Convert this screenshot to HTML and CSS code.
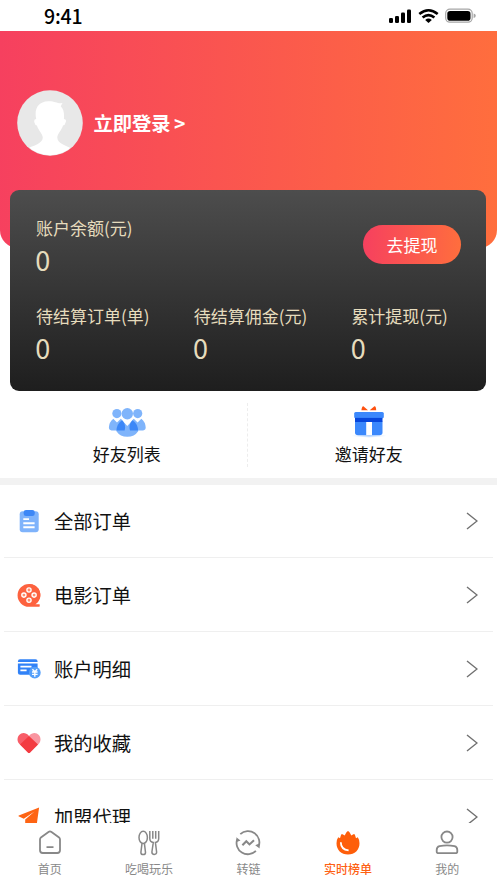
FILE: index.html
```html
<!DOCTYPE html>
<html lang="zh-CN">
<head>
<meta charset="utf-8">
<meta name="viewport" content="width=device-width, initial-scale=1">
<title>我的</title>
<link rel="stylesheet" href="styles.css">
</head>
<body>
<div class="app">
  <header class="status">
    <span class="time">9:41</span>
    <svg class="status-icons" width="92" height="20" viewBox="0 0 92 20">
      <g fill="#000">
        <rect x="1" y="12" width="4" height="5" rx="1.3"/><rect x="7" y="10" width="4" height="7" rx="1.3"/><rect x="13" y="6.5" width="4" height="10.5" rx="1.3"/><rect x="19" y="3.5" width="4" height="13.5" rx="1.3"/>
        <path d="M37.2 13.9Q40.5 11.2 43.8 13.9L40.5 17Z"/>
      </g>
      <path d="M31.3 8.1Q40.5 .4 49.7 8.1M34.6 11.5Q40.5 6.6 46.4 11.5" fill="none" stroke="#000" stroke-width="2.6"/>
      <rect x="57.7" y="3.2" width="26.5" height="13" rx="4.2" fill="#fff" stroke="#a6a6a6" stroke-width="1.2"/>
      <rect x="59.3" y="4.9" width="23.2" height="9.8" rx="2.8"/>
      <path d="M85.6 7.6Q87.8 8 87.8 9.8T85.6 12Z" fill="#a6a6a6"/>
    </svg>
  </header>

  <main class="content">
    <section class="hero">
      <svg class="avatar" width="66" height="66" viewBox="0 0 66 66">
        <defs><clipPath id="face"><circle cx="33" cy="33" r="32.2"/></clipPath></defs>
        <circle cx="33" cy="33" r="32.8" fill="#e8e8e8"/>
        <path clip-path="url(#face)" fill="#fff" d="M19.2 29C17 19 21 11.7 31 11.2C38 10.8 39 13.5 45.5 13.1L43.7 16.3C47 19.5 47.3 24 46.9 29Q50 29 48.6 32.5Q48 35.4 46 35.4C44.3 40.8 40.4 43.5 40.3 47.5C40.2 53.5 48 55.5 56 59V67H9V59C17 55.5 25.8 53.5 25.8 47.5C25.6 43.5 21.6 40.8 19.9 35.4Q18 35.4 17.4 32.5Q16.5 29 19.2 29Z"/>
      </svg>
      <a class="login">立即登录 &gt;</a>
    </section>

    <section class="wallet">
      <div class="wallet-row">
        <div class="stat"><span class="label">账户余额(元)</span><span class="value">0</span></div>
        <button class="withdraw">去提现</button>
      </div>
      <div class="stats">
        <div class="stat"><span class="label">待结算订单(单)</span><span class="value">0</span></div>
        <div class="stat"><span class="label">待结算佣金(元)</span><span class="value">0</span></div>
        <div class="stat"><span class="label">累计提现(元)</span><span class="value">0</span></div>
      </div>
    </section>

    <section class="shortcuts">
      <a class="shortcut">
        <svg width="38" height="34" viewBox="0 0 38 34">
          <defs><clipPath id="torso"><path d="M14 16.2L19.3 22L24.6 16.2C28.5 19 30.2 22.5 30.2 27.3Q26.5 32.8 19.3 32.8T8.4 27.3C8.4 22.5 10.1 19 14 16.2Z"/></clipPath></defs>
          <g fill="#7fb4fb"><circle cx="8.9" cy="9.6" r="4.6"/><circle cx="29.7" cy="9.6" r="4.6"/><circle cx="19.3" cy="9.7" r="5.7"/>
          <path d="M5.3 14.8L9 18.6L12.8 14.8C16.6 18 18 22.5 16.6 26.4H3.5Q.8 26 .9 23.5Q1.2 18 5.3 14.8Z"/><path d="M33.3 14.8L29.6 18.6L25.8 14.8C22 18 20.6 22.5 22 26.4H35.1Q37.8 26 37.7 23.5Q37.4 18 33.3 14.8Z"/>
          <path d="M14 16.2L19.3 22L24.6 16.2C28.5 19 30.2 22.5 30.2 27.3Q26.5 32.8 19.3 32.8T8.4 27.3C8.4 22.5 10.1 19 14 16.2Z"/></g>
          <g clip-path="url(#torso)" fill="#3c87f7"><path d="M5.3 14.8L9 18.6L12.8 14.8C16.6 18 18 22.5 16.6 26.4H3.5Q.8 26 .9 23.5Q1.2 18 5.3 14.8Z"/><path d="M33.3 14.8L29.6 18.6L25.8 14.8C22 18 20.6 22.5 22 26.4H35.1Q37.8 26 37.7 23.5Q37.4 18 33.3 14.8Z"/></g>
        </svg>
        <span>好友列表</span>
      </a>
      <a class="shortcut">
        <svg width="38" height="34" viewBox="0 0 38 34">
          <defs><linearGradient id="shade"><stop stop-color="#dcecff" stop-opacity=".2"/><stop offset=".5" stop-color="#c4ddff"/><stop offset="1" stop-color="#dcecff" stop-opacity=".2"/></linearGradient></defs>
          <g transform="translate(0 1)">
          <ellipse cx="19" cy="30.7" rx="17" ry="1.5" fill="url(#shade)"/>
          <path d="M18 5.2L13.4 1.3Q12 .9 11.4 5.3H17ZM19.7 5.2L24.4 1.3Q26 .9 26.2 5.3H21Z" fill="#fe5110"/>
          <rect x="4.2" y="7" width="29.6" height="6.3" rx="1.5" fill="#3b88fc"/>
          <path d="M5 16.5H32.5V27.5Q32.5 30.2 29.6 30.2H8Q5 30.2 5 27.5Z" fill="#3b88fc"/>
          <path d="M5 12.9H32.5V17H5Z" fill="#0646dc"/><path d="M16.2 17H22V30.2H16.2Z" fill="#fff"/>
          </g>
        </svg>
        <span>邀请好友</span>
      </a>
    </section>

    <nav class="menu">
      <a class="item">
        <svg class="icon" width="24" height="24" viewBox="0 0 24 24"><rect x="2.7" y="2.3" width="19" height="21" rx="3" fill="#7fb3fb"/><rect x="6.7" y="1" width="11" height="6" rx="2.3" fill="#3d87f6"/><path d="M6.3 10.1H12M6.3 14.2H17.6M6.3 18.3H17.6" stroke="#fff" stroke-width="1.9"/></svg>
        <span>全部订单</span><svg class="arrow" viewBox="0 0 12 18"><path d="M1 1L11 9L1 17"/></svg>
      </a>
      <a class="item">
        <svg class="icon" width="24" height="24" viewBox="0 0 24 24"><path d="M12 .9A11.1 11.1 0 1 0 12 23.8H22.3Q23 23.8 22.6 21.3H18.3A11.1 11.1 0 0 0 12 .9Z" fill="#fd623f"/><path d="M12 .9A11.1 11.1 0 0 1 18.3 21.3L12 23Z" fill="#fd623f"/><g fill="#fd8f70" stroke="#fff" stroke-width="1.35"><circle cx="12" cy="7" r="2.1"/><circle cx="12" cy="17.2" r="2.1"/><circle cx="6.9" cy="12.1" r="2.1"/><circle cx="17.1" cy="12.1" r="2.1"/></g></svg>
        <span>电影订单</span><svg class="arrow" viewBox="0 0 12 18"><path d="M1 1L11 9L1 17"/></svg>
      </a>
      <a class="item">
        <svg class="icon" width="24" height="24" viewBox="0 0 24 24"><path d="M.9 4.5Q.9 2.3 3 2.3H18.5Q20.6 2.3 20.6 4.5V5H.9ZM.9 6.6H20.6V17.8H3.1Q.9 17.8 .9 15.7Z" fill="#3182f7"/><path d="M3.4 9.6H14.5M3.4 13.3H9.6" stroke="#fff" stroke-width="1.7"/><circle cx="17.8" cy="15.7" r="5.9" fill="#55a0fa"/><path d="M15.4 12.3L17.8 14.8L20.2 12.3M15 15H20.6M15 17.4H20.6M17.8 14.8V19.7" fill="none" stroke="#fff" stroke-width="1.4"/></svg>
        <span>账户明细</span><svg class="arrow" viewBox="0 0 12 18"><path d="M1 1L11 9L1 17"/></svg>
      </a>
      <a class="item">
        <svg class="icon" width="24" height="24" viewBox="0 0 24 24"><path d="M12 5C8.8 1.2 4.7 1.4 2.2 4.1C-.2 6.8.1 10.6 2.4 13L12 22.3Z" fill="#f85d68"/><path d="M12 5C15.2 1.2 19.3 1.4 21.8 4.1C24.2 6.8 23.9 10.6 21.6 13L12 22.3Z" fill="#f995a0"/><path d="M12 4.9L21 13.6L13.2 21.5Q12 22.6 10.8 21.5L3 13.6Z" fill="#f33b41"/></svg>
        <span>我的收藏</span><svg class="arrow" viewBox="0 0 12 18"><path d="M1 1L11 9L1 17"/></svg>
      </a>
      <a class="item">
        <svg class="icon" width="24" height="24" viewBox="0 0 24 24"><path d="M22.1 2.4L1.8 10.4Q1 11 2 11.5L6.8 13.7L17.5 6.4L8.2 14.6V22.5L12 18L19.5 21.3Z" fill="#fe6413"/></svg>
        <span>加盟代理</span><svg class="arrow" viewBox="0 0 12 18"><path d="M1 1L11 9L1 17"/></svg>
      </a>
    </nav>
  </main>

  <nav class="tabs">
    <a class="tab"><svg viewBox="0 0 26 26"><path d="M11.5 2L3.9 7.5Q3 8.2 3 9.5V20.3Q3 23 5.7 23H20.3Q23 23 23 20.3V9.5Q23 8.2 22.1 7.5L14.5 2Q13 .9 11.5 2ZM9.5 17.1H16.5"/></svg><span>首页</span></a>
    <a class="tab"><svg viewBox="0 0 26 26"><g stroke-width="1.5"><ellipse cx="7.2" cy="7.4" rx="4.2" ry="6.1"/><path d="M6 13.3L4.9 22.4Q4.9 24.5 7.2 24.5T9.5 22.4L8.4 13.3M13.8 1V8.5Q13.8 12 17.3 12.4L15.9 22Q15.9 24.4 18.3 24.4T20.6 22L19.4 12.4Q22.7 12 22.7 8.5V1M16.8 1V8.7M19.7 1V8.7"/></g></svg><span>吃喝玩乐</span></a>
    <a class="tab"><svg viewBox="0 0 26 26"><path d="M5.3 4.2A11.3 11.3 0 0 1 23.4 17M20.9 20.9A11.3 11.3 0 0 1 2.2 9.2"/><path d="M1.3 7.3L5.5 10.5L1.7 12ZM24.7 18.4L20.2 15.3L24.2 13.5Z" fill="#888" stroke="none"/><path d="M7.4 15.3L11.3 11.2L14.5 14.4L19 10.2" stroke-width="2.1"/></svg><span>转链</span></a>
    <a class="tab active"><svg viewBox="0 0 26 26"><path d="M13 1Q14.4 1.3 16.3 5.6Q18.6 3.7 19.3 4Q20 4.4 21 8.2L22.8 7.3Q24.5 9.8 24.5 13.2C24.5 20 19.8 24.4 13 24.4S1.5 20 1.5 13.2Q1.5 9.8 3.2 7.3L5 8.2Q6 4.4 6.7 4Q7.4 3.7 9.7 5.6Q11.6 1.3 13 1Z" fill="#fe5e0a" stroke="none"/><path d="M5.8 12.2Q5.9 19.5 13.6 20.4" stroke="#fff" stroke-width="1.8"/></svg><span>实时榜单</span></a>
    <a class="tab"><svg viewBox="0 0 26 26"><circle cx="13" cy="7.1" r="5.6"/><path d="M5.5 16.1Q13 14.5 20.5 16.1Q23.3 16.8 23.3 20V21.4Q23.3 23.2 21.3 23.2H4.7Q2.7 23.2 2.7 21.4V20Q2.7 16.8 5.5 16.1Z"/></svg><span>我的</span></a>
  </nav>
</div>
</body>
</html>
```
FILE: styles.css
```css
* {
  box-sizing: border-box;
}

body {
  margin: 0;
  font-family: "Noto Sans CJK SC", sans-serif;
  color: #111;
  background: #fff;
}

svg {
  display: block;
  flex: none;
}

.app {
  display: flex;
  flex-direction: column;
  height: 883px;
  overflow: hidden;
}

.status {
  flex: none;
  height: 31px;
  padding: 0 17px 0 44px;
  display: flex;
  align-items: center;
  justify-content: space-between;
}

.time {
  font-size: 19.5px;
  font-weight: 500;
  line-height: 28px;
  letter-spacing: -0.2px;
  color: #000;
}

.content {
  flex: 1;
  min-height: 0;
  overflow: hidden;
}

.hero {
  height: 217px;
  padding: 59px 17px 0;
  display: flex;
  align-items: flex-start;
  gap: 10.5px;
  background: linear-gradient(92deg, #f6405f, #ff6e3d);
  border-radius: 0 0 18px 18px;
}

.login {
  color: #fff;
  font-size: 19.3px;
  font-weight: 700;
  line-height: 66px;
  word-spacing: -1px;
}

.wallet {
  height: 201px;
  margin: -58px 11px 0 10px;
  padding: 25px 25px 0 26px;
  color: #e6dcbd;
  background: linear-gradient(#4d4d4d, #1e1e1e);
  border-radius: 9px;
}

.wallet-row {
  height: 88px;
  display: flex;
  justify-content: space-between;
}

.stats {
  display: grid;
  grid-template-columns: repeat(3, 157.7px);
}

.stat {
  display: flex;
  flex-direction: column;
  white-space: nowrap;
}

.label {
  font-size: 17px;
  line-height: 26px;
}

.value {
  margin-left: -0.7px;
  font-size: 27px;
  line-height: 38px;
}

.withdraw {
  width: 98px;
  height: 39px;
  margin: 10px 0 0;
  padding: 0;
  border: 0;
  border-radius: 20px;
  font: 17px/38px "Noto Sans CJK SC", sans-serif;
  color: #fff;
  background: linear-gradient(92deg, #f6405f, #ff6e3d);
}

.shortcuts {
  height: 94px;
  padding: 12px 7px 0;
  display: grid;
  grid-template-columns: 240.5px 1fr;
  border-bottom: 7px solid #f2f2f2;
}

.shortcut {
  height: 64px;
  display: flex;
  flex-direction: column;
  align-items: center;
  gap: 3px;
  font-size: 17px;
  line-height: 26px;
}

.shortcut:first-child {
  border-right: 1px dashed #ededed;
}

.shortcut svg {
  margin-top: 1px;
}

.menu {
  margin-top: -1px;
  padding: 0 4px;
}

.item {
  height: 74px;
  padding: 1px 15px 0 13px;
  display: flex;
  align-items: center;
  font-size: 19.3px;
  line-height: 30px;
  border-bottom: 1px solid #efefef;
}

.icon {
  margin-right: 13px;
}

.arrow {
  width: 12px;
  height: 18px;
  margin-left: auto;
  fill: none;
  stroke: #707070;
  stroke-width: 1.4;
}

.tabs {
  flex: none;
  height: 60px;
  padding-top: 7px;
  display: grid;
  grid-template-columns: repeat(5, 1fr);
  background: #fff;
}

.tab {
  display: flex;
  flex-direction: column;
  align-items: center;
  gap: 4px;
  color: #888;
  font-size: 12px;
  line-height: 18px;
}

.tab svg {
  width: 26px;
  height: 26px;
  fill: none;
  stroke: #888;
  stroke-width: 1.8;
}

.tab.active {
  color: #fe6113;
  font-weight: 500;
}
```
